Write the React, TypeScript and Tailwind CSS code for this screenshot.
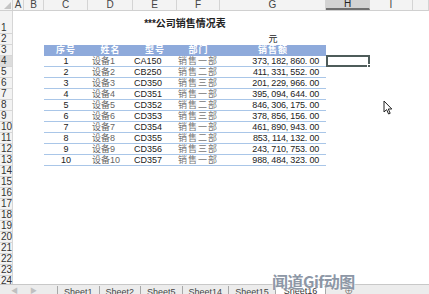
import React from 'react';

const rows = [
  ['1', '设备1', 'CA150', '销售一部', '373, 182, 860. 00'],
  ['2', '设备2', 'CB250', '销售二部', '411, 331, 552. 00'],
  ['3', '设备3', 'CD350', '销售三部', '201, 229, 966. 00'],
  ['4', '设备4', 'CD351', '销售一部', '395, 094, 644. 00'],
  ['5', '设备5', 'CD352', '销售二部', '846, 306, 175. 00'],
  ['6', '设备6', 'CD353', '销售三部', '378, 856, 156. 00'],
  ['7', '设备7', 'CD354', '销售一部', '461, 890, 943. 00'],
  ['8', '设备8', 'CD355', '销售二部', '853, 114, 132. 00'],
  ['9', '设备9', 'CD356', '销售三部', '243, 710, 753. 00'],
  ['10', '设备10', 'CD357', '销售一部', '988, 484, 323. 00'],
];

const cols = [
  { name: 'A', w: 'w-[11px]' },
  { name: 'B', w: 'w-[20px]' },
  { name: 'C', w: 'w-[44px]' },
  { name: 'D', w: 'w-[45px]' },
  { name: 'E', w: 'w-[44px]' },
  { name: 'F', w: 'w-[43px]' },
  { name: 'G', w: 'w-[106px]' },
  { name: 'H', w: 'w-[44px]' },
  { name: 'I', w: 'w-[43px]' },
  { name: '', w: 'w-[16px]' },
];

const tabs = ['Sheet1', 'Sheet2', 'Sheet5', 'Sheet14', 'Sheet15'];

const RowLabel: React.FC<{ n: number; tall?: boolean; active?: boolean }> = ({ n, tall, active }) => (
  <div
    className={`w-[13px] shrink-0 flex items-end pl-px border-r border-b border-[#d6d6d6] text-[10px] leading-[10px] text-[#333] ${
      tall ? 'h-[23px]' : 'h-[11px]'
    } ${active ? 'bg-[#dcdcdc]' : 'bg-[#f3f3f3]'}`}
  >
    {n}
  </div>
);

const App: React.FC = () => {
  return (
    <div className="relative w-[429px] h-[294px] flex flex-col bg-white overflow-hidden font-['Liberation_Sans','Noto_Sans_CJK_SC',sans-serif]">
      {/* Column headers */}
      <div className="flex h-[11px] shrink-0 bg-[#f3f3f3] border-b border-[#d0d0d0]">
        <div className="w-[13px] shrink-0 border-r border-[#d0d0d0] relative">
          <div className="absolute right-[1px] bottom-[1px] w-0 h-0 border-l-[7px] border-l-transparent border-b-[7px] border-b-[#c4c4c4]" />
        </div>
        {cols.map((c) => (
          <div
            key={c.name || 'J'}
            className={`${c.w} shrink-0 flex items-center justify-center border-r border-[#d4d4d4] text-[10px] leading-none ${
              c.name === 'H' ? 'bg-[#d3d3d3] border-b-2 border-b-[#6f6f6f] text-[#222]' : 'text-[#444]'
            }`}
          >
            {c.name}
          </div>
        ))}
      </div>

      {/* Sheet body */}
      <div className="flex-1 overflow-hidden">
        {/* Row 1 title */}
        <div className="flex">
          <RowLabel n={1} tall />
          <div className="w-[31px] shrink-0" />
          <div className="w-[282px] shrink-0 flex items-center justify-center text-[10px] font-semibold text-[#222] pt-px">
            ***公司销售情况表
          </div>
        </div>

        {/* Row 2 unit */}
        <div className="flex">
          <RowLabel n={2} />
          <div className="w-[207px] shrink-0" />
          <div className="w-[106px] shrink-0 flex items-center justify-center text-[9px] leading-none text-[#222]">元</div>
        </div>

        {/* Row 3 header */}
        <div className="flex">
          <RowLabel n={3} />
          <div className="w-[31px] shrink-0" />
          <div className="flex h-[11px] bg-[#8eaadb] text-white font-bold text-[9px] leading-none tracking-[1px]">
            <div className="w-[44px] flex items-center justify-center">序号</div>
            <div className="w-[45px] flex items-center justify-center">姓名</div>
            <div className="w-[44px] flex items-center justify-center">型号</div>
            <div className="w-[43px] flex items-center justify-center">部门</div>
            <div className="w-[106px] flex items-center justify-center">销售额</div>
          </div>
        </div>

        {/* Data rows */}
        {rows.map((r, i) => (
          <div key={r[0]} className="flex">
            <RowLabel n={i + 4} active={i === 0} />
            <div className="w-[31px] shrink-0" />
            <div className="flex h-[11px] border-b border-[#a9c6e8] text-[9px] leading-none">
              <div className="w-[44px] flex items-center justify-center text-[#222]">{r[0]}</div>
              <div className="w-[45px] flex items-center pl-[4px] text-[#666]">{r[1]}</div>
              <div className="w-[44px] flex items-center pl-px text-[#222]">{r[2]}</div>
              <div className="w-[43px] flex items-center pl-px text-[#777] tracking-[1px]">{r[3]}</div>
              <div className="w-[106px] flex items-center justify-end pr-[7px] text-[#222] tracking-[-0.2px]">{r[4]}</div>
            </div>
            {i === 0 && (
              <div className="relative w-[44px] h-[12px] -mt-px border-2 border-[#4e5c5a]">
                <div className="absolute -right-[3px] -bottom-[3px] w-[4px] h-[4px] bg-[#4e5c5a] border border-white" />
              </div>
            )}
          </div>
        ))}

        {/* Empty rows */}
        {Array.from({ length: 11 }, (_, i) => (
          <div key={i} className="flex">
            <RowLabel n={i + 14} />
          </div>
        ))}
      </div>

      {/* Sheet tabs */}
      <div className="h-[10px] shrink-0 flex items-start bg-[#ececec] border-t border-[#c8c8c8] overflow-hidden text-[9px] leading-[12px] text-[#444]">
        <div className="w-[57px] shrink-0 flex gap-[12px] pl-[11px] text-[#c0c0c0] text-[7px]">
          <span>◀</span>
          <span>▶</span>
        </div>
        {tabs.map((t) => (
          <div key={t} className="shrink-0 border-l border-[#a8a8a8] px-[6px] mt-px">
            {t}
          </div>
        ))}
        <div className="shrink-0 bg-white px-[8px] border-x border-[#a8a8a8] text-[#333]">Sheet16</div>
        <div className="shrink-0 pl-[18px] text-[#666]">⊕</div>
      </div>

      {/* Mouse cursor */}
      <svg className="absolute left-[383px] top-[100px]" width="10" height="15" viewBox="0 0 10 15">
        <path d="M1 1 L1 12 L3.6 9.6 L5.6 14 L7.2 13.3 L5.3 9 L8.8 9 Z" fill="white" stroke="#222" strokeWidth="1" strokeLinejoin="round" />
      </svg>

      {/* Watermark */}
      <div className="absolute left-[272px] top-[273px] text-[16px] leading-none font-bold text-[#8d97a6] tracking-[-0.5px] [text-shadow:0_0_2px_white,0_0_1px_white] font-['Noto_Sans_CJK_SC',sans-serif]">
        闻道Gif动图
      </div>
    </div>
  );
};

export default App;
